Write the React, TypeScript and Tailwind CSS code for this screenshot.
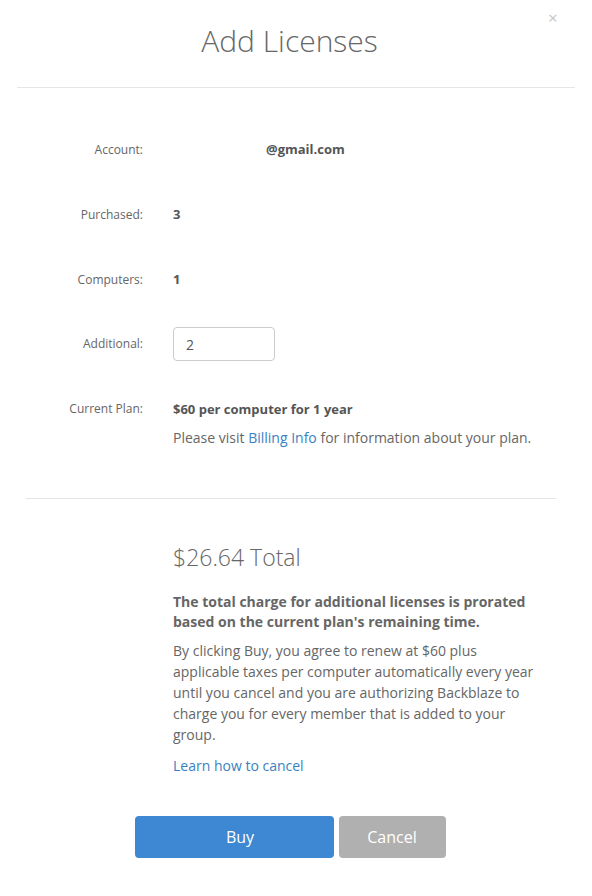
import React from "react";

export default function App() {
  const font = { fontFamily: '"Open Sans", "Noto Sans", sans-serif' };
  return (
    <div className="relative w-[592px] h-[896px] bg-white text-[#666]" style={font}>
      <div className="absolute top-[6px] left-[548px] text-[17px] leading-[24px] text-[#c4c4c4]">×</div>
      <div className="mx-[17px] h-[88px] border-b border-[#e5e5e5] pt-[21px]">
        <h1 className="text-center text-[30px] leading-[40px] font-light text-[#676767] pr-[13px]">Add Licenses</h1>
      </div>

      <div className="pt-[45px]">
        <Row label="Account:">
          <span className="ml-[93px] text-[13px] font-bold text-[#555]">@gmail.com</span>
        </Row>
        <Row label="Purchased:" className="mt-[31px]">
          <span className="text-[13px] font-bold text-[#555]">3</span>
        </Row>
        <Row label="Computers:" className="mt-[31px]">
          <span className="text-[13px] font-bold text-[#555]">1</span>
        </Row>
        <Row label="Additional:" className="mt-[30px]">
          <div className="w-[102px] h-[34px] rounded-[4px] border border-[#ccc] flex items-center px-[12px] text-[14px] text-[#555]">
            2
          </div>
        </Row>
        <div className="flex mt-[38px]">
          <div className="w-[143px] text-right text-[12px] leading-[20px] text-[#666]">Current Plan:</div>
          <div className="ml-[30px]">
            <div className="text-[13px] leading-[20px] font-bold text-[#555]">$60 per computer for 1 year</div>
            <div className="mt-[9px] text-[14px] leading-[20px] text-[#666]">
              Please visit <span className="text-[#3a7fc1]">Billing Info</span> for information about your plan.
            </div>
          </div>
        </div>
      </div>

      <div className="ml-[26px] mr-[36px] mt-[50px] border-t border-[#e5e5e5]" />

      <div className="ml-[173px] w-[368px] pt-[43px]">
        <div className="text-[23px] leading-[30px] font-light text-[#676767]">$26.64 Total</div>
        <p className="mt-[20px] text-[14px] leading-[20px] font-bold text-[#666]">
          The total charge for additional licenses is prorated based on the current plan's remaining time.
        </p>
        <p className="mt-[8px] text-[14px] leading-[21px] text-[#666]">
          By clicking Buy, you agree to renew at $60 plus applicable taxes per computer automatically every year until you cancel and you are authorizing Backblaze to charge you for every member that is added to your group.
        </p>
        <div className="mt-[10px] text-[14px] leading-[21px] text-[#3a7fc1]">Learn how to cancel</div>
      </div>

      <div className="mt-[40px] flex justify-center gap-[5px] pr-[12px]">
        <button className="w-[199px] h-[42px] rounded-[4px] bg-[#3d87d3] text-white text-[16px] pl-[12px]">Buy</button>
        <button className="w-[107px] h-[42px] rounded-[4px] bg-[#b0b0b0] text-white text-[16px]">Cancel</button>
      </div>
    </div>
  );
}

function Row({ label, children, className = "" }: { label: string; children: React.ReactNode; className?: string }) {
  return (
    <div className={`flex items-center h-[34px] ${className}`}>
      <div className="w-[143px] text-right text-[12px] text-[#666]">{label}</div>
      <div className="ml-[30px] flex items-center">{children}</div>
    </div>
  );
}
